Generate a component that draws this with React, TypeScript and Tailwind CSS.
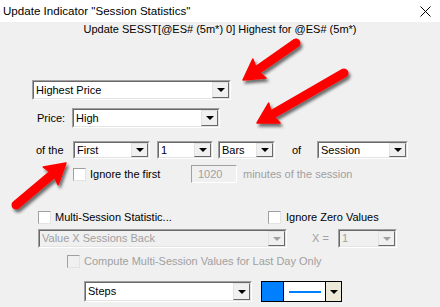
import type { ReactNode } from "react";

const FONT = "font-['Liberation_Sans',Arial,sans-serif]";

function DropButton({ disabled }: { disabled?: boolean }) {
  return (
    <div className="flex h-full w-[17px] shrink-0 items-center justify-center border border-t-[#e3e3e3] border-l-[#e3e3e3] border-b-[#696969] border-r-[#696969] bg-[#f0f0f0]">
      <div
        className={
          "h-0 w-0 border-x-[4px] border-t-[4px] border-x-transparent " +
          (disabled ? "border-t-[#a0a0a0]" : "border-t-black")
        }
      />
    </div>
  );
}

function Combo({
  value,
  width,
  disabled,
  className = "",
}: {
  value: string;
  width: string;
  disabled?: boolean;
  className?: string;
}) {
  return (
    <div
      className={
        "flex h-full shrink-0 border border-t-[#a0a0a0] border-l-[#a0a0a0] border-b-white border-r-white " +
        width +
        " " +
        className
      }
    >
      <div
        className={
          "flex min-w-0 flex-1 items-center border border-t-[#696969] border-l-[#696969] border-b-[#e3e3e3] border-r-[#e3e3e3] " +
          (disabled ? "bg-[#f0f0f0] text-[#a0a0a0]" : "bg-white text-black")
        }
      >
        <span className="flex-1 truncate pl-[2px]">{value}</span>
        <DropButton disabled={disabled} />
      </div>
    </div>
  );
}

function Check({ disabled, className = "" }: { disabled?: boolean; className?: string }) {
  return (
    <div
      className={
        "h-[13px] w-[13px] shrink-0 border border-t-[#a0a0a0] border-l-[#a0a0a0] border-b-[#e3e3e3] border-r-[#e3e3e3] " +
        (disabled ? "bg-[#f0f0f0]" : "bg-white") +
        " " +
        className
      }
    />
  );
}

function Row({ h, mt, children }: { h: string; mt: string; children: ReactNode }) {
  return <div className={"flex items-center " + h + " " + mt}>{children}</div>;
}

type Pt = [number, number];

function Arrow({ tail, tip }: { tail: Pt; tip: Pt }) {
  const dx = tip[0] - tail[0];
  const dy = tip[1] - tail[1];
  const len = Math.hypot(dx, dy);
  const ux = dx / len;
  const uy = dy / len;
  const nx = -uy;
  const ny = ux;
  const headLen = 20;
  const headW = 23;
  const bx = tip[0] - ux * headLen;
  const by = tip[1] - uy * headLen;
  const pts = [
    [tip[0], tip[1]],
    [bx + (nx * headW) / 2, by + (ny * headW) / 2],
    [bx + ux * 3, by + uy * 3],
    [bx - (nx * headW) / 2, by - (ny * headW) / 2],
  ]
    .map((p) => p.join(","))
    .join(" ");
  return (
    <g filter="url(#sh)">
      <line
        x1={tail[0]}
        y1={tail[1]}
        x2={bx + ux * 4}
        y2={by + uy * 4}
        stroke="#ff0000"
        strokeWidth={9}
        strokeLinecap="round"
      />
      <polygon points={pts} fill="#ff0000" stroke="#ff0000" strokeWidth={1.5} strokeLinejoin="round" />
    </g>
  );
}

export default function App() {
  return (
    <div className={"relative flex h-[307px] w-[440px] flex-col overflow-hidden text-[11px] " + FONT}>
      {/* title bar */}
      <div className="flex h-[22px] shrink-0 items-center justify-between bg-white pl-[3px] pr-[9px] text-[11.6px] text-black">
        <span>Update Indicator "Session Statistics"</span>
        <svg width="11" height="11" viewBox="0 0 11 11">
          <path d="M0.5 0.5 L10.5 10.5 M10.5 0.5 L0.5 10.5" stroke="#000" strokeWidth="1" />
        </svg>
      </div>

      <div className="flex flex-1 flex-col bg-[#f0f0f0] text-black">
        <div className="h-[14px] text-center text-[11px] leading-[14px]">
          Update SESST[@ES# (5m*) 0] Highest for @ES# (5m*)
        </div>

        <Row h="h-[20px]" mt="mt-[44px]">
          <Combo value="Highest Price" width="w-[199px]" className="ml-[32px]" />
        </Row>

        <Row h="h-[20px]" mt="mt-[8px]">
          <span className="ml-[37px] w-[35px]">Price:</span>
          <Combo value="High" width="w-[148px]" />
        </Row>

        <Row h="h-[18px]" mt="mt-[13px]">
          <span className="ml-[36px] w-[37px]">of the</span>
          <Combo value="First" width="w-[77px]" />
          <Combo value="1" width="w-[56px]" className="ml-[7px]" />
          <Combo value="Bars" width="w-[57px]" className="ml-[5px]" />
          <span className="ml-[17px] w-[25px]">of</span>
          <Combo value="Session" width="w-[91px]" />
        </Row>

        <Row h="h-[18px]" mt="mt-[6px]">
          <Check className="ml-[73px]" />
          <span className="ml-[4px] w-[101px]">Ignore the first</span>
          <div className="flex h-full w-[46px] items-center border border-t-[#a0a0a0] border-l-[#a0a0a0] border-b-white border-r-white bg-[#f0f0f0] pl-[6px] text-[#a0a0a0]">
            1020
          </div>
          <span className="ml-[6px] text-[#a0a0a0]">minutes of the session</span>
        </Row>

        <Row h="h-[13px]" mt="mt-[28px]">
          <Check className="ml-[38px]" />
          <span className="ml-[4px] w-[213px]">Multi-Session Statistic...</span>
          <Check />
          <span className="ml-[5px]">Ignore Zero Values</span>
        </Row>

        <Row h="h-[19px]" mt="mt-[5px]">
          <Combo value="Value X Sessions Back" width="w-[249px]" className="ml-[38px]" disabled />
          <span className="ml-[25px] w-[26px] text-[#a0a0a0]">X =</span>
          <Combo value="1" width="w-[59px]" disabled />
        </Row>

        <Row h="h-[13px]" mt="mt-[7px]">
          <Check className="ml-[67px]" disabled />
          <span className="ml-[4px] text-[#a0a0a0]">Compute Multi-Session Values for Last Day Only</span>
        </Row>

        <Row h="h-[21px]" mt="mt-[13px]">
          <Combo value="Steps" width="w-[168px]" className="ml-[84px]" />
          <div className="ml-[9px] flex h-full w-[81px] border border-black">
            <div className="w-[22px] border-r border-black bg-[#0080ff]" />
            <div className="flex flex-1 items-center justify-center bg-white">
              <div className="h-[2px] w-[32px] bg-[#0080ff]" />
            </div>
            <div className="flex w-[16px] items-center justify-center border-l border-black bg-[#ece9d8]">
              <div className="h-0 w-0 border-x-[4px] border-t-[4px] border-x-transparent border-t-black" />
            </div>
          </div>
        </Row>
      </div>

      {/* annotation arrows */}
      <svg className="pointer-events-none absolute left-0 top-0" width="440" height="307">
        <defs>
          <filter id="sh" x="-30%" y="-30%" width="160%" height="160%">
            <feDropShadow dx="2" dy="3" stdDeviation="1.5" floodColor="#000" floodOpacity="0.55" />
          </filter>
        </defs>
        <Arrow tail={[296, 43]} tip={[243, 80]} />
        <Arrow tail={[344, 73]} tip={[257, 123]} />
        <Arrow tail={[16, 205]} tip={[66, 163]} />
      </svg>
    </div>
  );
}
